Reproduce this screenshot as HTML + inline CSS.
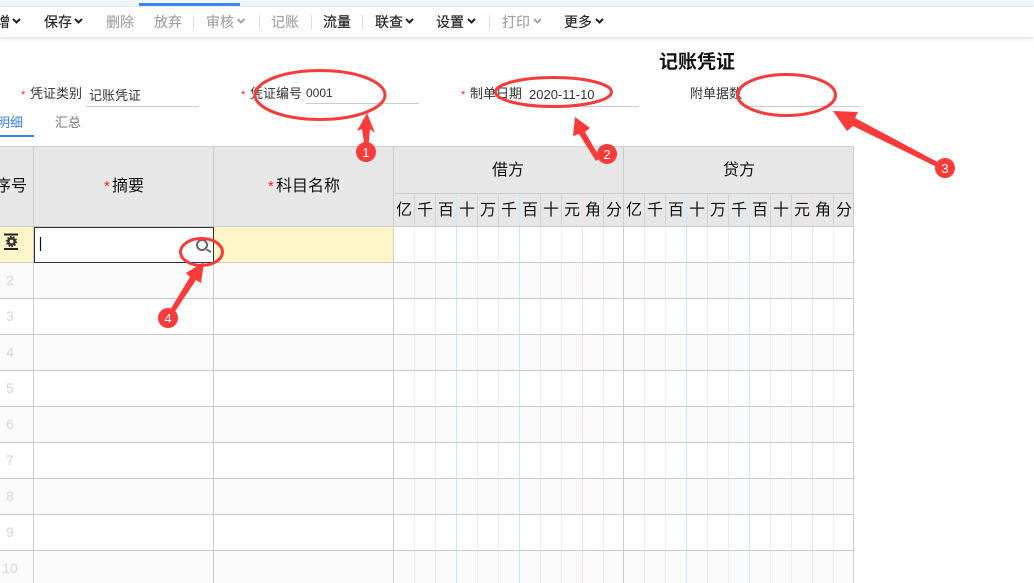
<!DOCTYPE html>
<html><head><meta charset="utf-8"><style>
html,body{margin:0;padding:0;background:#fff;width:1034px;height:583px;overflow:hidden}
svg{display:block;position:absolute;left:0;top:0}
text{font-family:"Liberation Sans","Noto Sans CJK SC",sans-serif;fill:#222}
.tb text{font-size:14px;stroke:#222;stroke-width:.15px}
.tb .g{fill:#a3a3a3;stroke:#a3a3a3}
.lb text{font-size:13px;fill:#333}
.h text{font-size:16px;fill:#111;text-anchor:middle}
.n text{font-size:14px;fill:#ddd;text-anchor:middle;stroke:#ddd;stroke-width:.3px}
.s{fill:#f5222d !important}
</style></head><body>
<svg width="1034" height="583" viewBox="0 0 1034 583">
<defs><filter id="sh" x="-5%" y="-50%" width="110%" height="200%"><feDropShadow dx="0" dy="1" stdDeviation="2" flood-color="#000" flood-opacity=".16"/></filter></defs>
<!-- top -->
<rect x="0" y="0" width="1034" height="6" fill="#f0f5fe"/>
<rect x="0" y="7" width="1034" height="30" fill="#fff" filter="url(#sh)"/>
<rect x="0" y="6" width="1034" height="1" fill="#e6e9ef"/>
<rect x="139" y="3" width="101" height="3" fill="#3b82f6"/>
<g class="tb">
<text x="-4" y="27">增</text>
<text x="44" y="27">保存</text>
<text class="g" x="106" y="27">删除</text>
<text class="g" x="154" y="27">放弃</text>
<text class="g" x="206" y="27">审核</text>
<text class="g" x="271" y="27">记账</text>
<text x="323" y="27">流量</text>
<text x="375" y="27">联查</text>
<text x="436" y="27">设置</text>
<text class="g" x="502" y="27">打印</text>
<text x="564" y="27">更多</text>
</g>
<g fill="none" stroke-width="2" stroke="#222">
<path d="M13 19l3.500 3.500 3.500-3.500"/>
<path d="M75 19l3.500 3.500 3.500-3.500"/>
<path stroke="#a3a3a3" d="M237.500 19l3.500 3.500 3.500-3.500"/>
<path d="M406 19l3.500 3.500 3.500-3.500"/>
<path d="M468 19l3.500 3.500 3.500-3.500"/>
<path stroke="#a3a3a3" d="M534 19l3.500 3.500 3.500-3.500"/>
<path d="M596 19l3.500 3.500 3.500-3.500"/>
</g>
<path d="M193.500 15v15M259.500 15v15M311.500 15v15M362.500 15v15M489.500 15v15" stroke="#d8dde5" stroke-width="1"/>
<!-- title -->
<text x="659" y="68" style="font-size:19px;font-weight:bold;fill:#111">记账凭证</text>
<!-- form -->
<g class="lb">
<text class="s" x="21" y="98" style="font-size:11px">*</text><text x="30" y="98">凭证类别</text><text x="89" y="100">记账凭证</text>
<text class="s" x="241" y="98" style="font-size:11px">*</text><text x="250" y="98">凭证编号</text><text x="306" y="97" style="font-size:12px">0001</text>
<text class="s" x="461" y="98" style="font-size:11px">*</text><text x="470" y="98">制单日期</text><text x="529" y="99" style="font-size:13px">2020-11-10</text>
<text x="690" y="98">附单据数</text>
</g>
<path d="M86 106.500h113M306 103.500h113M526 106.500h113M746 106.500h113" stroke="#ccc" stroke-width="1"/>
<!-- tabs -->
<text x="-3" y="127" style="font-size:13px;fill:#3b82f6">明细</text>
<text x="55" y="127" style="font-size:13px;fill:#777">汇总</text>
<rect x="0" y="135" width="34" height="2" fill="#3b82f6"/>
<!-- table fills -->
<rect x="0" y="146" width="854" height="80" fill="#e7e7e7"/>
<rect x="0" y="226" width="394" height="36" fill="#fef5c8"/>
<rect x="0" y="262" width="854" height="36" fill="#fafafa"/>
<rect x="0" y="334" width="854" height="36" fill="#fafafa"/>
<rect x="0" y="406" width="854" height="36" fill="#fafafa"/>
<rect x="0" y="478" width="854" height="36" fill="#fafafa"/>
<rect x="0" y="550" width="854" height="33" fill="#fafafa"/>
<!-- digit column lines -->
<path d="M414.500 193V583M435.500 193V583M477.500 193V583M498.500 193V583M540.500 193V583M561.500 193V583M603.500 193V583M644.500 193V583M665.500 193V583M707.500 193V583M728.500 193V583M770.500 193V583M791.500 193V583M833.500 193V583" stroke="#ececec" stroke-width="1"/>
<path d="M414.500 193V226M435.500 193V226M477.500 193V226M498.500 193V226M540.500 193V226M561.500 193V226M603.500 193V226M644.500 193V226M665.500 193V226M707.500 193V226M728.500 193V226M770.500 193V226M791.500 193V226M833.500 193V226" stroke="#d2d2d2" stroke-width="1"/>
<path d="M456.500 193V583M519.500 193V583M686.500 193V583M749.500 193V583" stroke="#cce8f5" stroke-width="1"/>
<path d="M582.500 193V583M812.500 193V583" stroke="#f8dcdc" stroke-width="1"/>
<!-- grid -->
<path d="M0 146.500H853.500M393 193.500H853.500M0 226.500H853.500M0 262.500H853.500M0 298.500H853.500M0 334.500H853.500M0 370.500H853.500M0 406.500H853.500M0 442.500H853.500M0 478.500H853.500M0 514.500H853.500M0 550.500H853.500M33.500 146V583M213.500 146V583M393.500 146V583M623.500 146V583M853.500 146V583" stroke="#ccc" stroke-width="1" fill="none"/>
<!-- headers -->
<g class="h">
<text x="11" y="191">序号</text>
<text x="128" y="191">摘要</text>
<text x="308" y="191">科目名称</text>
<text x="508" y="175">借方</text>
<text x="739" y="175">贷方</text>
<text x="404" y="215">亿</text><text x="425" y="215">千</text><text x="446" y="215">百</text><text x="467" y="215">十</text><text x="488" y="215">万</text><text x="509" y="215">千</text><text x="530" y="215">百</text><text x="551" y="215">十</text><text x="572" y="215">元</text><text x="593" y="215">角</text><text x="614" y="215">分</text>
<text x="634" y="215">亿</text><text x="655" y="215">千</text><text x="676" y="215">百</text><text x="697" y="215">十</text><text x="718" y="215">万</text><text x="739" y="215">千</text><text x="760" y="215">百</text><text x="781" y="215">十</text><text x="802" y="215">元</text><text x="823" y="215">角</text><text x="844" y="215">分</text>
</g>
<text class="s" x="104" y="191" style="font-size:15px">*</text>
<text class="s" x="268" y="191" style="font-size:15px">*</text>
<!-- row numbers -->
<g class="n">
<text x="10" y="285">2</text><text x="10" y="321">3</text><text x="10" y="357">4</text><text x="10" y="393">5</text><text x="10" y="429">6</text><text x="10" y="465">7</text><text x="10" y="501">8</text><text x="10" y="537">9</text><text x="10" y="573">10</text>
</g>
<!-- gear -->
<path d="M4 234.500h14M4 249h14" stroke="#222" stroke-width="2"/>
<circle cx="11.500" cy="241.500" r="3.200" fill="none" stroke="#333" stroke-width="2.600"/>
<circle cx="11.500" cy="241.500" r="5" fill="none" stroke="#333" stroke-width="1.400" stroke-dasharray="1.600 1.540"/>
<!-- input -->
<rect x="34.500" y="227.500" width="179" height="35" fill="#fff" stroke="#333" stroke-width="1"/>
<path d="M40.500 237v14" stroke="#111" stroke-width="1.200"/>
<circle cx="202" cy="245" r="5" fill="none" stroke="#666" stroke-width="2"/>
<path d="M206.500 249.500l4.500 2.500" stroke="#666" stroke-width="2"/>
<!-- annotations -->
<g fill="none" stroke="#f73b3b" stroke-width="3">
<ellipse cx="320" cy="95" rx="65" ry="24.500"/>
<ellipse cx="553.500" cy="92" rx="58" ry="14.500"/>
<ellipse cx="786.500" cy="95" rx="49" ry="20.500"/>
<ellipse cx="201.500" cy="252" rx="21" ry="13.500"/>
</g>
<g fill="#fb3a3a">
<polygon points="367,113 375,133 370,129 368.500,146 364.500,146 362,129 357,131"/>
<polygon points="575,117 590,128 585,132 600,158 596,161 579,134 573,136"/>
<polygon points="833,111 858,112 855,118 945,166 943,170 853,126 847,131"/>
<polygon points="204,262 201,283 196,280 174,313 170,310 190,277 186,273"/>
<circle cx="366" cy="152" r="10"/>
<circle cx="607" cy="154" r="10"/>
<circle cx="945" cy="168" r="10"/>
<circle cx="168" cy="318" r="10"/>
</g>
<g style="font-size:13px;text-anchor:middle">
<text x="366" y="157" style="fill:#fff">1</text>
<text x="607" y="159" style="fill:#fff">2</text>
<text x="945" y="173" style="fill:#fff">3</text>
<text x="168" y="323" style="fill:#fff">4</text>
</g>
</svg>
</body></html>
